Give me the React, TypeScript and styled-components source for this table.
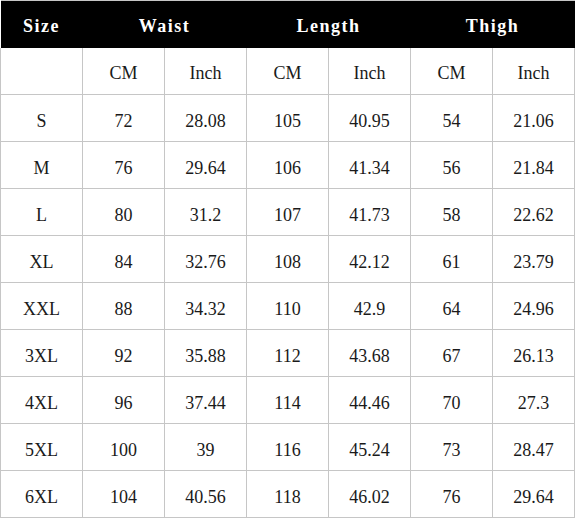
import React from 'react';
import styled, { createGlobalStyle } from 'styled-components';

const GlobalStyle = createGlobalStyle`
  html, body {
    margin: 0;
    padding: 0;
    background: #ffffff;
  }
`;

const Table = styled.table`
  border-collapse: collapse;
  table-layout: fixed;
  width: 575px;
  font-family: "Liberation Serif", "Times New Roman", serif;
  color: #1a1a1a;
  border-top: 1px solid #c6c6c6;
`;

const HeadRow = styled.tr`
  height: 47px;
  background: #000;
`;

const HeadCell = styled.th`
  color: #fff;
  font-size: 18px;
  font-weight: bold;
  letter-spacing: 1.5px;
  text-align: center;
  padding: 5px 0 0;
  border: none;
`;

const Row = styled.tr`
  height: 47px;
`;

const Cell = styled.td`
  font-size: 18px;
  text-align: center;
  padding: 6px 0 0;
  border: 1px solid #c6c6c6;
  border-top: none;
`;

const Col = styled.col`
  width: 82px;
`;

const rows: [string, number, string, number, string, number, string][] = [
  ['S', 72, '28.08', 105, '40.95', 54, '21.06'],
  ['M', 76, '29.64', 106, '41.34', 56, '21.84'],
  ['L', 80, '31.2', 107, '41.73', 58, '22.62'],
  ['XL', 84, '32.76', 108, '42.12', 61, '23.79'],
  ['XXL', 88, '34.32', 110, '42.9', 64, '24.96'],
  ['3XL', 92, '35.88', 112, '43.68', 67, '26.13'],
  ['4XL', 96, '37.44', 114, '44.46', 70, '27.3'],
  ['5XL', 100, '39', 116, '45.24', 73, '28.47'],
  ['6XL', 104, '40.56', 118, '46.02', 76, '29.64'],
];

export default function App() {
  return (
    <>
      <GlobalStyle />
      <Table>
        <colgroup>
          {Array.from({ length: 7 }).map((_, i) => (
            <Col key={i} />
          ))}
        </colgroup>
        <thead>
          <HeadRow>
            <HeadCell>Size</HeadCell>
            <HeadCell colSpan={2}>Waist</HeadCell>
            <HeadCell colSpan={2}>Length</HeadCell>
            <HeadCell colSpan={2}>Thigh</HeadCell>
          </HeadRow>
        </thead>
        <tbody>
          <Row>
            <Cell />
            <Cell>CM</Cell>
            <Cell>Inch</Cell>
            <Cell>CM</Cell>
            <Cell>Inch</Cell>
            <Cell>CM</Cell>
            <Cell>Inch</Cell>
          </Row>
          {rows.map((r) => (
            <Row key={r[0]}>
              {r.map((v, i) => (
                <Cell key={i}>{v}</Cell>
              ))}
            </Row>
          ))}
        </tbody>
      </Table>
    </>
  );
}
